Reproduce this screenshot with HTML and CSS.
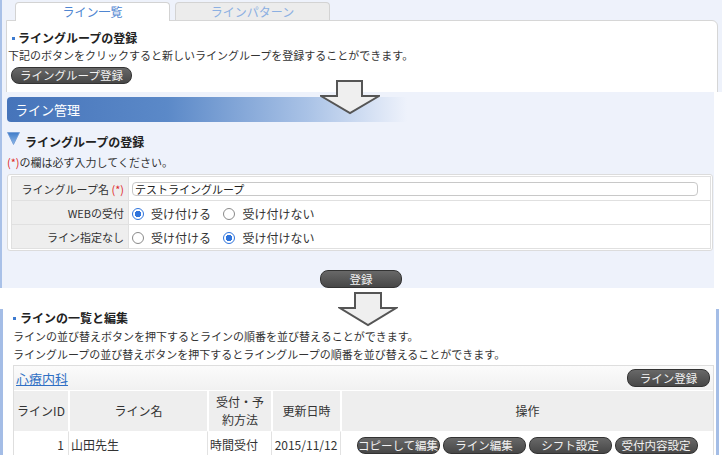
FILE: index.html
```html
<!DOCTYPE html>
<html>
<head>
<meta charset="utf-8">
<title>ライン管理</title>
<link rel="stylesheet" href="styles.css">
</head>
<body>
<div class="page">
  <div class="shot shot-tabs">
    <ul class="tabs">
      <li class="on">ライン一覧</li>
      <li>ラインパターン</li>
    </ul>
    <div class="tabbody">
      <h3 class="dot">ライングループの登録</h3>
      <p>下記のボタンをクリックすると新しいライングループを登録することができます。</p>
      <a class="btn btn-group">ライングループ登録</a>
    </div>
  </div>

  <div class="shot shot-form">
    <div class="bar">ライン管理</div>
    <h3 class="tri"><svg width="13" height="13" viewBox="0 0 13 13"><defs><linearGradient id="tg" x1="0" y1="0" x2="0" y2="1"><stop offset="0" stop-color="#3f7cc9"/><stop offset="1" stop-color="#8fb8e8"/></linearGradient></defs><polygon points="0.5,0.5 12.5,0.5 6.5,12.5" fill="url(#tg)" stroke="#6f9bd6" stroke-width="0.8"/></svg>ライングループの登録</h3>
    <p class="note"><span class="req">(*)</span>の欄は必ず入力してください。</p>
    <div class="formbox">
      <table>
        <tr>
          <th>ライングループ名 <span class="req">(*)</span></th>
          <td><input type="text" class="txt" value="テストライングループ"></td>
        </tr>
        <tr>
          <th>WEBの受付</th>
          <td>
            <label class="radio"><input type="radio" name="web" checked>受け付ける</label>
            <label class="radio"><input type="radio" name="web">受け付けない</label>
          </td>
        </tr>
        <tr>
          <th>ライン指定なし</th>
          <td>
            <label class="radio"><input type="radio" name="none">受け付ける</label>
            <label class="radio"><input type="radio" name="none" checked>受け付けない</label>
          </td>
        </tr>
      </table>
    </div>
    <div class="submit"><a class="btn btn-reg">登録</a></div>
  </div>

  <div class="shot shot-list">
    <div class="wrap">
      <h3 class="dot">ラインの一覧と編集</h3>
      <p class="desc">ラインの並び替えボタンを押下するとラインの順番を並び替えることができます。</p>
      <p class="desc">ライングループの並び替えボタンを押下するとライングループの順番を並び替えることができます。</p>
      <div class="listbox">
        <div class="grouprow">
          <a class="grp">心療内科</a>
          <a class="btn btn-line">ライン登録</a>
        </div>
        <table class="lines">
          <colgroup><col class="c1"><col class="c2"><col class="c3"><col class="c4"><col></colgroup>
          <tr>
            <th>ラインID</th>
            <th>ライン名</th>
            <th>受付・予<br>約方法</th>
            <th>更新日時</th>
            <th>操作</th>
          </tr>
          <tr>
            <td class="num">1</td>
            <td>山田先生</td>
            <td>時間受付</td>
            <td class="date">2015/11/12</td>
            <td class="ops"><a class="btn btn-op">コピーして編集</a><a class="btn btn-op">ライン編集</a><a class="btn btn-op">シフト設定</a><a class="btn btn-op">受付内容設定</a></td>
          </tr>
        </table>
      </div>
    </div>
  </div>

  <svg class="arrow arrow1" width="60" height="35" viewBox="0 0 60 35"><polygon points="17,1 42,1 42,16 59,16 30,33 1,16 17,16" fill="#efefef" stroke="#555" stroke-width="2" stroke-linejoin="miter"/></svg>
  <svg class="arrow arrow2" width="60" height="35" viewBox="0 0 60 35"><polygon points="17,1 43,1 43,16 58,16 30,33 2,16 17,16" fill="#efefef" stroke="#555" stroke-width="2" stroke-linejoin="miter"/></svg>
</div>
</body>
</html>
```

FILE: styles.css
```css
body{ margin:0; background:#fff; color:#333; font-family:"Noto Sans CJK JP","Noto Sans",sans-serif; font-size:11px;}
ul,li,p,h3,table,th,td{ margin:0; padding:0; list-style:none;}
a{ text-decoration:none;}
.page{ position:relative; width:722px; height:455px; overflow:hidden;}
.shot{ overflow:hidden; box-sizing:border-box;}

/* shot 1 : tabs */
.shot-tabs{ height:92px; background:#eef2fb; border-left:2px solid #a9c1e8;}
.tabs{ display:flex; gap:5px; height:18px; padding:2px 0 0 13px;}
.tabs li{ width:155px; height:18px; line-height:18px; box-sizing:border-box; text-align:center; font-size:12px; color:#8cb0e2; background:#ececec; border:1px solid #d3d3d3; border-bottom:none; border-radius:4px 4px 0 0;}
.tabs li.on{ position:relative; z-index:1; height:19px; background:#fff; color:#4f86d1;}
.tabbody{ height:100px; margin:0 4px; padding:8px 0 0 1px; background:#fff; border:1px solid #d6d6d6; border-radius:0 6px 0 0;}
.dot{ position:relative; padding-left:10px; font-size:12px; font-weight:bold; line-height:18px; color:#222;}
.dot:before{ content:''; position:absolute; left:4px; top:8px; width:3px; height:3px; background:#3d7bd0;}
.tabbody p{ line-height:16px;}

.btn{ display:inline-block; box-sizing:border-box; height:17px; line-height:15px; text-align:center; font-size:11.5px; color:#f2f2f2; background:linear-gradient(#686868,#474747); border:1px solid #333; border-radius:8px; cursor:pointer;}
.btn-group{ width:121px; margin:4px 0 0 3px;}

/* shot 2 : form */
.shot-form{ width:714px; height:196px; padding-top:5px; background:#eef2fb; border-left:2px solid #a9c1e8;}
.bar{ width:400px; height:25px; line-height:25px; margin-left:5px; padding-left:8px; box-sizing:border-box; font-size:13px; color:#fff; border-radius:4px 0 0 4px; background:linear-gradient(to right,#4674ba 0%,#5b89c8 40%,#a9c2e6 75%,rgba(238,242,251,0) 100%);}
.tri{ display:flex; align-items:flex-start; gap:5px; margin:11px 0 0 5px; font-size:12px; font-weight:bold; line-height:18px; color:#222;}
.tri svg{ margin-top:-1px;}
.note{ margin:2px 0 0 5px; line-height:18px;}
.req{ color:#e02828;}
.formbox{ width:706px; box-sizing:border-box; margin:3px 0 0 5px; padding:1px 1px 1px 3px; background:#fff; border:1px solid #dcdcdc; border-radius:3px;}
.formbox table{ width:100%; border-collapse:collapse;}
.formbox th,.formbox td{ height:23px; border:1px solid #e0e0e0;}
.formbox th{ width:112px; padding-right:4px; text-align:right; font-weight:normal; background:#eee;}
.formbox td{ padding-left:3px;}
.txt{ display:block; width:566px; height:14px; box-sizing:border-box; margin:0; padding:0 2px; font:11px "Noto Sans CJK JP",sans-serif; color:#222; border:1px solid #c8c8c8; border-radius:4px; outline:none;}
.radio{ display:inline-flex; align-items:center; gap:7px; margin-right:10px; font-size:12px; line-height:16px; vertical-align:middle;}
.radio input{ appearance:none; -webkit-appearance:none; width:12px; height:12px; margin:0 0 0 0; box-sizing:border-box; border:1px solid #8a8a8a; border-radius:50%; background:#fff;}
.radio input:checked{ border-color:#2f74dc; background:radial-gradient(circle,#2f74dc 0,#2f74dc 3px,#fff 3.5px);}
.submit{ margin-top:19px; padding-left:6px; text-align:center;}
.btn-reg{ width:82px; height:18px; line-height:16px;}

/* shot 3 : list */
.shot-list{ height:167px; padding-top:21px;}
.wrap{ width:719px; height:200px; box-sizing:border-box; padding-left:10px; border-left:3px solid #a4bde6; border-right:3px solid #a4bde6;}
.wrap .dot{ padding-left:7px;}
.wrap .dot:before{ left:0;}
.desc{ line-height:17.5px;}
.desc:first-of-type{ margin-top:1px;}
.listbox{ width:699px; margin-top:2px; border:1px solid #dedede;}
.grouprow{ display:flex; justify-content:space-between; align-items:center; height:24px; padding:0 3px 0 2px; background:linear-gradient(#fbfbfb,#f1f1f1); border-bottom:1px solid #fff;}
.grp{ font-size:13px; color:#2f6fc4; text-decoration:underline;}
.btn-line{ width:83px; height:18px; line-height:16px; margin-top:-1px;}
.lines{ width:100%; table-layout:fixed; border-collapse:separate; border-spacing:0; font-size:12px;}
.lines .c1{ width:54px;}
.lines .c2{ width:139px;}
.lines .c3{ width:64px;}
.lines .c4{ width:69px;}
.lines th{ height:40px; font-weight:normal; line-height:18px; color:#333; background:#eee; border-left:2px solid #fff;}
.lines th:first-child{ border-left:none;}
.lines td{ height:24px; padding:4px 2px 0; box-sizing:border-box; vertical-align:top; line-height:17px; border-top:1px solid #fff; border-left:1px solid #e2e2e2;}
.lines td:first-child{ border-left:none;}
.lines td.num{ text-align:right; padding-right:4px;}
.lines td.date{ text-align:center;}
.lines td.ops{ text-align:center; padding:4px 0 0; white-space:nowrap;}
.btn-op{ width:83px; margin:0 1.5px;}

.arrow{ position:absolute;}
.arrow1{ left:320px; top:80px;}
.arrow2{ left:338px; top:292px;}
```
